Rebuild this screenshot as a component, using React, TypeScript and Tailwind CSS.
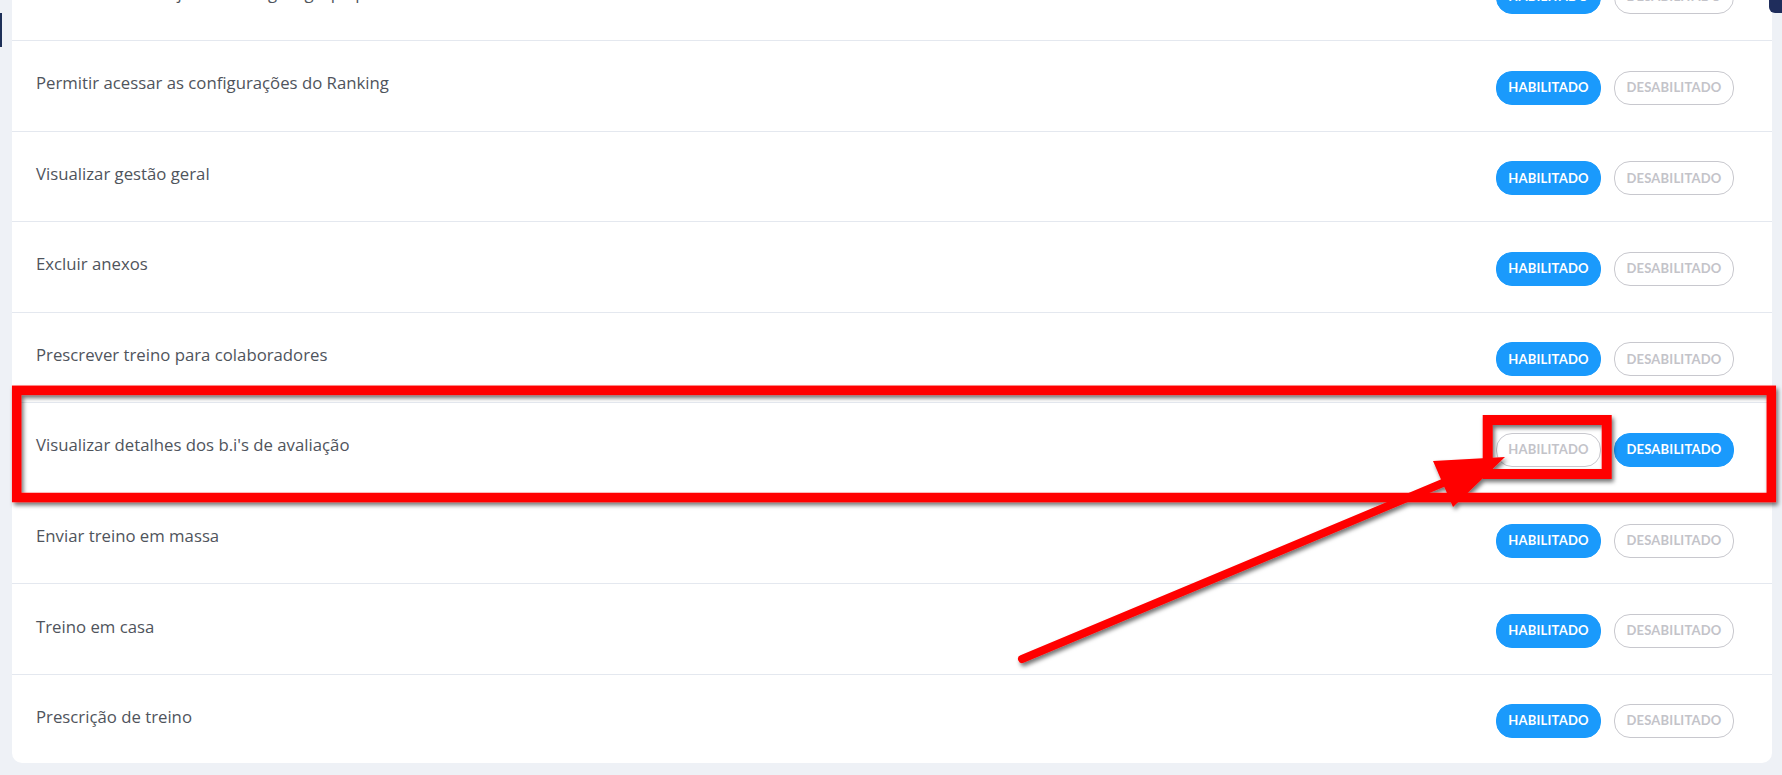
import React from "react";

type Row = { label: string; enabled: boolean };

const rows: Row[] = [
  { label: "Permitir editar o ajuste de carga e grupo por aluno", enabled: true },
  { label: "Permitir acessar as configurações do Ranking", enabled: true },
  { label: "Visualizar gestão geral", enabled: true },
  { label: "Excluir anexos", enabled: true },
  { label: "Prescrever treino para colaboradores", enabled: true },
  { label: "Visualizar detalhes dos b.i's de avaliação", enabled: false },
  { label: "Enviar treino em massa", enabled: true },
  { label: "Treino em casa", enabled: true },
  { label: "Prescrição de treino", enabled: true },
];

function Btn({ label, active, w }: { label: string; active: boolean; w: string }) {
  return (
    <div
      className={
        "h-[34px] rounded-[16px] flex items-center justify-center text-[13px] font-bold tracking-[0.2px] border " +
        w +
        " " +
        (active
          ? "bg-[#1a9afc] border-[#1a9afc] text-white"
          : "bg-white border-[#c8c8ce] text-[#c3c3c9]")
      }
      style={{ fontFamily: "Lato, 'Noto Sans', sans-serif" }}
    >
      {label}
    </div>
  );
}

export default function App() {
  return (
    <div
      className="relative w-full h-[775px] overflow-hidden bg-[#eef1f6]"
      style={{ fontFamily: "'Open Sans', 'Noto Sans', sans-serif" }}
    >
      <div className="ml-[12px] mr-[10px] mt-[-49.57px] bg-white rounded-b-[10px]">
        {rows.map((r, i) => (
          <div
            key={i}
            className={
              "flex items-center justify-between pl-[24px] pr-[38px] " +
              (i === 0
                ? "h-[89.57px]"
                : i === rows.length - 1
                ? "h-[89.5px] border-t border-[#e4e8ef]"
                : "h-[90.57px] border-t border-[#e4e8ef]")
            }
          >
            <span className="text-[16.75px] text-[#4f545c] mb-[6px]">{r.label}</span>
            <div className="flex gap-[13px] mt-[4px]">
              <Btn label="HABILITADO" active={r.enabled} w="w-[105px]" />
              <Btn label="DESABILITADO" active={!r.enabled} w="w-[120px]" />
            </div>
          </div>
        ))}
      </div>

      {/* left edge navy marker */}
      <div className="absolute left-0 top-[13px] w-[2px] h-[34px] bg-[#1d2f58]" />
      {/* top-right navy tab */}
      <div className="absolute right-0 top-0 w-[13px] h-[13px] bg-[#1f2d5c] rounded-bl-[6px]" />

      {/* annotation overlay */}
      <svg
        className="absolute left-0 top-0 pointer-events-none"
        width="1782"
        height="775"
        viewBox="0 0 1782 775"
      >
        <defs>
          <filter id="sh" x="-5%" y="-20%" width="110%" height="140%">
            <feDropShadow dx="2" dy="3" stdDeviation="2" floodColor="#000" floodOpacity="0.55" />
          </filter>
        </defs>
        <g filter="url(#sh)">
          <rect x="16.7" y="390.3" width="1754.6" height="107.2" fill="none" stroke="#ff0000" strokeWidth="9.5" />
          <rect x="1487.7" y="420" width="119" height="54" fill="none" stroke="#ff0000" strokeWidth="10" />
          <line x1="1022" y1="659" x2="1450" y2="480" stroke="#ff0000" strokeWidth="8" strokeLinecap="round" />
          <polygon points="1505,457 1433,461 1453,507" fill="#ff0000" />
        </g>
      </svg>
    </div>
  );
}
